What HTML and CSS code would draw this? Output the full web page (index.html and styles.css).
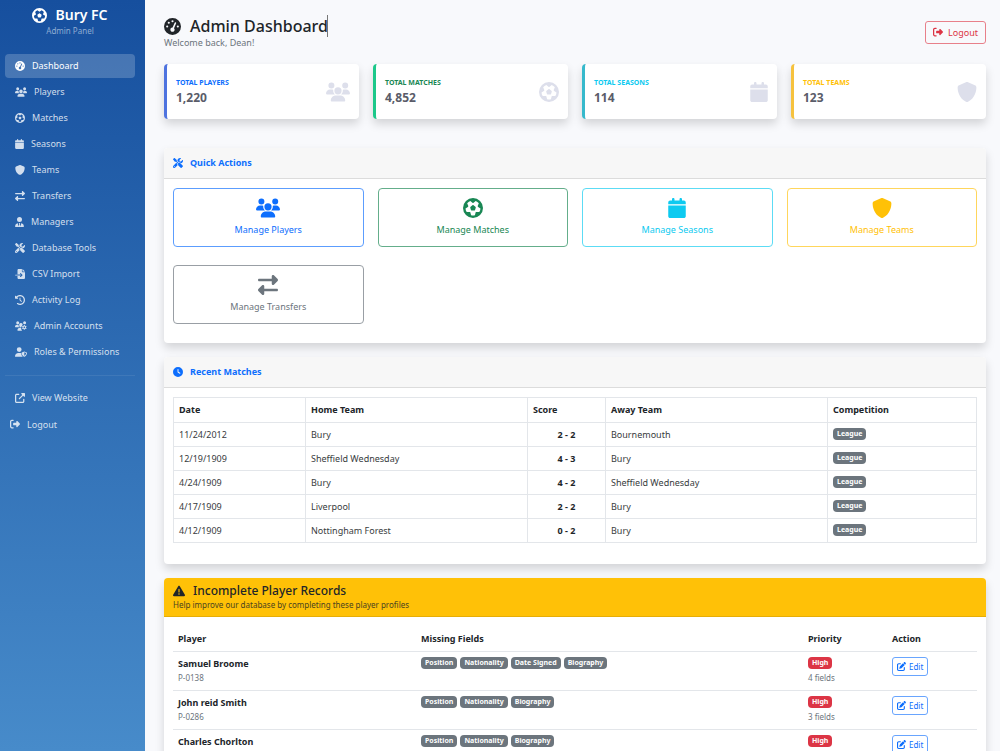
FILE: index.html
```html
<!DOCTYPE html>
<html lang="en">
<head>
    <meta charset="UTF-8">
    <meta name="viewport" content="width=device-width, initial-scale=1.0">
    <title>Admin Dashboard - Bury FC</title>
    <link rel="stylesheet" href="styles.css">
</head>
<body>

    <!-- Icon sprite -->
    <svg class="sprite" aria-hidden="true">
        <symbol id="gauge" viewBox="0 0 512 512"><path d="M0 256a256 256 0 1 1 512 0A256 256 0 1 1 0 256zM288 96a32 32 0 1 0 -64 0 32 32 0 1 0 64 0zM256 416c35.300 0 64-28.700 64-64c0-17.400-6.900-33.100-18.100-44.600L366 161.700c5.300-12.100-.2-26.300-12.300-31.600s-26.300 .2-31.600 12.300L257.900 288c-.6 0-1.300 0-1.900 0c-35.300 0-64 28.700-64 64s28.700 64 64 64zM176 144a32 32 0 1 0 -64 0 32 32 0 1 0 64 0zM96 288a32 32 0 1 0 0-64 32 32 0 1 0 0 64zm352-32a32 32 0 1 0 -64 0 32 32 0 1 0 64 0z"/></symbol>
        <symbol id="futbol" viewBox="0 0 512 512"><path d="M417.300 360.100l-71.600-4.800c-5.200-.3-10.300 1.100-14.500 4.200s-7.200 7.400-8.400 12.500l-17.600 69.600C289.500 445.800 273 448 256 448s-33.500-2.200-49.200-6.400L189.200 372c-1.300-5-4.300-9.400-8.400-12.500s-9.300-4.500-14.500-4.200l-71.600 4.800c-17.600-27.200-28.500-59.200-30.400-93.600L125 228.300c4.400-2.800 7.600-7 9.200-11.900s1.400-10.200-.5-15l-26.700-66.600C128 109.200 155.300 89 186.700 76.900l55.200 46c4 3.300 9 5.100 14.100 5.100s10.200-1.800 14.100-5.100l55.200-46c31.300 12.100 58.700 32.300 79.600 57.900l-26.700 66.600c-1.900 4.800-2.100 10.100-.5 15s4.900 9.100 9.200 11.900l60.700 38.200c-1.900 34.400-12.800 66.400-30.400 93.600zM256 512A256 256 0 1 0 256 0a256 256 0 1 0 0 512zm14.100-325.700c-8.400-6.100-19.800-6.100-28.200 0L194 221c-8.400 6.100-11.900 16.900-8.700 26.800l18.300 56.300c3.200 9.900 12.400 16.600 22.800 16.600h59.200c10.400 0 19.600-6.700 22.800-16.600l18.300-56.300c3.200-9.900-.3-20.700-8.700-26.800l-47.900-34.800z"/></symbol>
        <symbol id="users" viewBox="0 0 640 512"><path d="M144 0a80 80 0 1 1 0 160A80 80 0 1 1 144 0zM512 0a80 80 0 1 1 0 160A80 80 0 1 1 512 0zM0 298.700C0 239.800 47.800 192 106.700 192h42.700c15.900 0 31 3.500 44.600 9.700c-1.300 7.200-1.900 14.700-1.900 22.300c0 38.200 16.800 72.500 43.300 96H21.300C9.600 320 0 310.400 0 298.700zM405.300 320c26.600-23.500 43.300-57.800 43.300-96c0-7.600-.7-15-1.900-22.300c13.600-6.300 28.700-9.700 44.600-9.700h42.700C592.200 192 640 239.800 640 298.700c0 11.800-9.600 21.300-21.300 21.300H405.300zM224 224a96 96 0 1 1 192 0 96 96 0 1 1 -192 0zM128 485.300C128 411.700 187.700 352 261.300 352H378.700C452.300 352 512 411.700 512 485.300c0 14.700-11.900 26.700-26.700 26.700H154.700c-14.700 0-26.700-11.900-26.700-26.700z"/></symbol>
        <symbol id="calendar" viewBox="0 0 448 512"><path d="M96 32V64H48C21.500 64 0 85.500 0 112v48H448V112c0-26.500-21.500-48-48-48H352V32c0-17.700-14.300-32-32-32s-32 14.300-32 32V64H160V32c0-17.700-14.300-32-32-32S96 14.300 96 32zM448 192H0V464c0 26.500 21.500 48 48 48H400c26.500 0 48-21.500 48-48V192z"/></symbol>
        <symbol id="shield" viewBox="0 0 512 512"><path d="M269.400 2.900C265.200 1 260.700 0 256 0s-9.200 1-13.400 2.900L54.300 82.800c-22 9.300-38.400 31-38.300 57.200c.5 99.200 41.300 280.700 213.600 363.200c16.700 8 36.100 8 52.800 0C454.700 420.700 495.500 239.200 496 140c.1-26.200-16.300-47.900-38.300-57.200L269.400 2.900z"/></symbol>
        <symbol id="exchange" viewBox="0 0 512 512"><path d="M32 96l320 0V32c0-12.900 7.800-24.600 19.800-29.600s25.700-2.200 34.900 6.900l96 96c6 6 9.400 14.100 9.400 22.600s-3.400 16.600-9.400 22.600l-96 96c-9.200 9.200-22.900 11.900-34.900 6.900s-19.800-16.600-19.800-29.600V160L32 160c-17.700 0-32-14.300-32-32s14.300-32 32-32zM480 352c17.700 0 32 14.300 32 32s-14.300 32-32 32H160v64c0 12.900-7.800 24.600-19.800 29.600s-25.700 2.200-34.900-6.900l-96-96c-6-6-9.400-14.100-9.400-22.600s3.400-16.600 9.400-22.600l96-96c9.200-9.200 22.900-11.900 34.900-6.900s19.800 16.600 19.800 29.600l0 64H480z"/></symbol>
        <symbol id="user-tie" viewBox="0 0 448 512"><path d="M96 128a128 128 0 1 0 256 0A128 128 0 1 0 96 128zm94.500 200.200l18.600 31L175.800 483.100l-36-146.900c-2-8.100-9.800-13.400-17.900-11.300C51.900 342.400 0 405.800 0 481.300c0 17 13.800 30.700 30.700 30.700H417.300c17 0 30.700-13.800 30.700-30.700c0-75.500-51.900-138.900-121.900-156.400c-8.100-2-15.900 3.300-17.900 11.300l-36 146.900L238.900 359.200l18.600-31c6.400-10.700-1.300-24.200-13.700-24.200H204.200c-12.400 0-20.100 13.600-13.700 24.200z"/></symbol>
        <symbol id="tools" viewBox="0 0 512 512"><path d="M78.600 5C69.100-2.400 55.600-1.500 47 7L7 47c-8.500 8.500-9.400 22-2.100 31.600l80 104c4.500 5.900 11.600 9.400 19 9.400h54.100l109 109c-14.700 29-10 65.400 14.300 89.600l112 112c12.500 12.500 32.800 12.500 45.300 0l64-64c12.500-12.500 12.500-32.800 0-45.300l-112-112c-24.200-24.200-60.600-29-89.600-14.300l-109-109V104c0-7.500-3.500-14.500-9.400-19L78.600 5zM19.900 396.100C7.200 408.800 0 426.100 0 444.100C0 481.600 30.400 512 67.900 512c18 0 35.300-7.200 48-19.900L233.700 374.300c-7.800-20.900-9-43.600-3.600-65.100l-61.700-61.700L19.900 396.100zM512 144c0-10.500-1.100-20.700-3.200-30.500c-2.400-11.200-16.100-14.100-24.200-6l-63.900 63.900c-3 3-7.100 4.700-11.300 4.700H352c-8.800 0-16-7.200-16-16V102.600c0-4.200 1.700-8.300 4.700-11.300l63.900-63.900c8.100-8.100 5.200-21.800-6-24.200C388.700 1.100 378.500 0 368 0C288.500 0 224 64.500 224 144l0 .8 85.300 85.300c36-9.100 75.800 .5 104 28.700L429 274.500c49-23 83-72.800 83-130.500zM56 432a24 24 0 1 1 48 0 24 24 0 1 1 -48 0z"/></symbol>
        <symbol id="file-import" viewBox="0 0 512 512"><path d="M128 64c0-35.300 28.700-64 64-64H352V128c0 17.700 14.300 32 32 32H512V448c0 35.300-28.700 64-64 64H192c-35.300 0-64-28.700-64-64V336H302.100l-39 39c-9.400 9.400-9.400 24.600 0 33.900s24.600 9.400 33.900 0l80-80c9.400-9.400 9.400-24.600 0-33.900l-80-80c-9.400-9.400-24.600-9.400-33.900 0s-9.400 24.600 0 33.900l39 39H128V64zm0 224v48H24c-13.300 0-24-10.700-24-24s10.700-24 24-24H128zM512 128H384V0L512 128z"/></symbol>
        <symbol id="history" viewBox="0 0 512 512"><path d="M75 75L41 41C25.900 25.900 0 36.600 0 57.900V168c0 13.300 10.700 24 24 24H134.100c21.400 0 32.100-25.900 17-41l-30.800-30.800C155 85.500 203 64 256 64c106 0 192 86 192 192s-86 192-192 192c-40.800 0-78.600-12.700-109.700-34.400c-14.500-10.100-34.400-6.600-44.600 7.900s-6.600 34.400 7.900 44.600C151.200 495 201.700 512 256 512c141.400 0 256-114.600 256-256S397.400 0 256 0C185.300 0 121.300 28.700 75 75zm181 53c-13.300 0-24 10.700-24 24V256c0 6.400 2.500 12.500 7 17l72 72c9.400 9.400 24.600 9.400 33.900 0s9.400-24.600 0-33.900l-65-65V152c0-13.300-10.700-24-24-24z"/></symbol>
        <symbol id="users-cog" viewBox="0 0 640 512"><path d="M144 0a80 80 0 1 1 0 160A80 80 0 1 1 144 0zM512 0a80 80 0 1 1 0 160A80 80 0 1 1 512 0zM0 298.700C0 239.800 47.800 192 106.700 192h42.700c15.900 0 31 3.500 44.600 9.700c-1.300 7.200-1.900 14.700-1.900 22.300c0 38.200 16.800 72.500 43.300 96H21.300C9.600 320 0 310.400 0 298.700zM224 224a96 96 0 1 1 188-30c-30 15-50 50-48 78c-12 20-27 48-44 48c-53 0-96-43-96-96zM128 485.300C128 411.700 187.700 352 261.300 352H335c-15 50 0 100 45 160H154.700c-14.700 0-26.700-11.900-26.700-26.700z"/><path fill-rule="evenodd" d="M471 200h50l8 42 24 14 40-15 26 44-33 28v30l33 28-26 44-40-15-24 14-8 44h-50l-8-44-24-14-40 15-26-44 33-28v-30l-33-28 26-44 40 15 24-14zM496 284a44 44 0 1 0 0 88 44 44 0 1 0 0-88z"/></symbol>
        <symbol id="user-shield" viewBox="0 0 640 512"><path d="M224 256A128 128 0 1 0 224 0a128 128 0 1 0 0 256zM178.300 304C79.800 304 0 383.800 0 482.300C0 498.700 13.300 512 29.700 512H418c-60-48-85-110-82-190c-20-12-43-18-66-18z"/><path fill-rule="evenodd" d="M496 224l132 52c8 3 12 10 12 20c0 90-45 175-130 213c-9 4-19 4-28 0c-85-38-130-123-130-213c0-10 4-17 12-20zM496 274v188c56-28 90-82 94-150z"/></symbol>
        <symbol id="external" viewBox="0 0 512 512"><path d="M352 0c-12.900 0-24.600 7.800-29.600 19.800s-2.200 25.700 6.900 34.900L370.700 96 201.400 265.400c-12.500 12.500-12.500 32.800 0 45.300s32.800 12.500 45.300 0L416 141.300l41.400 41.400c9.200 9.200 22.900 11.900 34.900 6.900s19.800-16.600 19.800-29.600V32c0-17.700-14.300-32-32-32H352zM80 32C35.800 32 0 67.800 0 112V432c0 44.200 35.800 80 80 80H400c44.200 0 80-35.800 80-80V320c0-17.700-14.300-32-32-32s-32 14.300-32 32V432c0 8.800-7.200 16-16 16H80c-8.800 0-16-7.200-16-16V112c0-8.800 7.200-16 16-16H192c17.700 0 32-14.300 32-32s-14.300-32-32-32H80z"/></symbol>
        <symbol id="sign-out" viewBox="0 0 512 512"><path d="M377.900 105.900L500.700 228.700c7.200 7.200 11.300 17.100 11.300 27.300s-4.100 20.100-11.300 27.300L377.900 406.100c-6.400 6.400-15 9.900-24 9.900c-18.700 0-33.900-15.200-33.900-33.900l0-62.100-128 0c-17.700 0-32-14.300-32-32l0-64c0-17.700 14.300-32 32-32l128 0 0-62.100c0-18.700 15.200-33.900 33.900-33.900c9 0 17.600 3.600 24 9.900zM160 96L96 96c-17.700 0-32 14.300-32 32l0 256c0 17.700 14.300 32 32 32l64 0c17.700 0 32 14.300 32 32s-14.300 32-32 32l-64 0c-53 0-96-43-96-96L0 128C0 75 43 32 96 32l64 0c17.700 0 32 14.300 32 32s-14.300 32-32 32z"/></symbol>
        <symbol id="clock" viewBox="0 0 512 512"><path d="M256 0a256 256 0 1 1 0 512A256 256 0 1 1 256 0zM232 120V256c0 8 4 15.500 10.700 20l96 64c11 7.400 25.900 4.400 33.300-6.700s4.400-25.900-6.700-33.300L280 243.200V120c0-13.300-10.700-24-24-24s-24 10.700-24 24z"/></symbol>
        <symbol id="warning" viewBox="0 0 512 512"><path d="M256 32c14.200 0 27.300 7.500 34.500 19.800l216 368c7.300 12.400 7.300 27.700 .2 40.100S486.300 480 472 480H40c-14.300 0-27.600-7.700-34.700-20.100s-7-27.800 .2-40.100l216-368C228.700 39.500 241.800 32 256 32zm0 128c-13.300 0-24 10.700-24 24V296c0 13.300 10.700 24 24 24s24-10.700 24-24V184c0-13.300-10.700-24-24-24zm32 224a32 32 0 1 0 -64 0 32 32 0 1 0 64 0z"/></symbol>
        <symbol id="edit" viewBox="0 0 512 512"><path d="M471.600 21.700c-21.900-21.900-57.300-21.900-79.200 0L362.300 51.700l97.900 97.900 30.100-30.100c21.900-21.900 21.900-57.300 0-79.200L471.600 21.700zm-299.200 220c-6.100 6.100-10.800 13.600-13.500 21.900l-29.600 88.800c-2.900 8.600-.6 18.100 5.800 24.600s15.900 8.700 24.600 5.800l88.800-29.600c8.200-2.700 15.700-7.400 21.900-13.500L437.700 172.300 339.700 74.300 172.400 241.700zM96 64C43 64 0 107 0 160V416c0 53 43 96 96 96H352c53 0 96-43 96-96V320c0-17.700-14.300-32-32-32s-32 14.300-32 32v96c0 17.700-14.300 32-32 32H96c-17.700 0-32-14.300-32-32V160c0-17.700 14.300-32 32-32h96c17.700 0 32-14.300 32-32s-14.300-32-32-32H96z"/></symbol>
    </svg>

    <div class="layout">
        <nav class="sidebar">
            <div class="brand">
                <div class="brand-name"><svg class="icon icon-lg"><use href="#futbol"/></svg>Bury FC</div>
                <div class="brand-sub">Admin Panel</div>
            </div>
            <a class="nav-link active" href="#"><svg class="icon"><use href="#gauge"/></svg>Dashboard</a>
            <a class="nav-link" href="#"><svg class="icon icon-wide"><use href="#users"/></svg>Players</a>
            <a class="nav-link" href="#"><svg class="icon"><use href="#futbol"/></svg>Matches</a>
            <a class="nav-link" href="#"><svg class="icon icon-narrow"><use href="#calendar"/></svg>Seasons</a>
            <a class="nav-link" href="#"><svg class="icon"><use href="#shield"/></svg>Teams</a>
            <a class="nav-link" href="#"><svg class="icon"><use href="#exchange"/></svg>Transfers</a>
            <a class="nav-link" href="#"><svg class="icon icon-narrow"><use href="#user-tie"/></svg>Managers</a>
            <a class="nav-link" href="#"><svg class="icon"><use href="#tools"/></svg>Database Tools</a>
            <a class="nav-link" href="#"><svg class="icon"><use href="#file-import"/></svg>CSV Import</a>
            <a class="nav-link" href="#"><svg class="icon"><use href="#history"/></svg>Activity Log</a>
            <a class="nav-link" href="#"><svg class="icon icon-wide"><use href="#users-cog"/></svg>Admin Accounts</a>
            <a class="nav-link" href="#"><svg class="icon icon-wide"><use href="#user-shield"/></svg>Roles &amp; Permissions</a>
            <hr class="nav-divider">
            <a class="nav-link" href="#"><svg class="icon"><use href="#external"/></svg>View Website</a>
            <button class="nav-logout" type="button"><svg class="icon"><use href="#sign-out"/></svg>Logout</button>
        </nav>

        <main class="main">
            <header class="page-header">
                <div>
                    <h1 class="page-title"><svg class="icon icon-xl"><use href="#gauge"/></svg>Admin Dashboard<span class="caret"></span></h1>
                    <p class="welcome">Welcome back, Dean!</p>
                </div>
                <button class="btn btn-danger" type="button"><svg class="icon"><use href="#sign-out"/></svg>Logout</button>
            </header>

            <section class="stats">
                <div class="stat stat-players">
                    <div class="stat-text">
                        <div class="stat-label">Total Players</div>
                        <div class="stat-value">1,220</div>
                    </div>
                    <svg class="stat-icon stat-icon-wide"><use href="#users"/></svg>
                </div>
                <div class="stat stat-matches">
                    <div class="stat-text">
                        <div class="stat-label">Total Matches</div>
                        <div class="stat-value">4,852</div>
                    </div>
                    <svg class="stat-icon"><use href="#futbol"/></svg>
                </div>
                <div class="stat stat-seasons">
                    <div class="stat-text">
                        <div class="stat-label">Total Seasons</div>
                        <div class="stat-value">114</div>
                    </div>
                    <svg class="stat-icon stat-icon-narrow"><use href="#calendar"/></svg>
                </div>
                <div class="stat stat-teams">
                    <div class="stat-text">
                        <div class="stat-label">Total Teams</div>
                        <div class="stat-value">123</div>
                    </div>
                    <svg class="stat-icon"><use href="#shield"/></svg>
                </div>
            </section>

            <section class="card">
                <h2 class="card-header"><svg class="icon"><use href="#tools"/></svg>Quick Actions</h2>
                <div class="card-body actions">
                    <a class="action action-primary" href="#"><svg class="action-icon"><use href="#users"/></svg>Manage Players</a>
                    <a class="action action-success" href="#"><svg class="action-icon"><use href="#futbol"/></svg>Manage Matches</a>
                    <a class="action action-info" href="#"><svg class="action-icon"><use href="#calendar"/></svg>Manage Seasons</a>
                    <a class="action action-warning" href="#"><svg class="action-icon"><use href="#shield"/></svg>Manage Teams</a>
                    <a class="action action-secondary" href="#"><svg class="action-icon"><use href="#exchange"/></svg>Manage Transfers</a>
                </div>
            </section>

            <section class="card">
                <h2 class="card-header"><svg class="icon"><use href="#clock"/></svg>Recent Matches</h2>
                <div class="card-body">
                    <table class="matches">
                        <colgroup>
                            <col class="col-date">
                            <col class="col-team">
                            <col class="col-score">
                            <col class="col-team">
                            <col>
                        </colgroup>
                        <thead>
                            <tr><th>Date</th><th>Home Team</th><th>Score</th><th>Away Team</th><th>Competition</th></tr>
                        </thead>
                        <tbody>
                            <tr><td>11/24/2012</td><td>Bury</td><td class="score">2 - 2</td><td>Bournemouth</td><td><span class="badge">League</span></td></tr>
                            <tr><td>12/19/1909</td><td>Sheffield Wednesday</td><td class="score">4 - 3</td><td>Bury</td><td><span class="badge">League</span></td></tr>
                            <tr><td>4/24/1909</td><td>Bury</td><td class="score">4 - 2</td><td>Sheffield Wednesday</td><td><span class="badge">League</span></td></tr>
                            <tr><td>4/17/1909</td><td>Liverpool</td><td class="score">2 - 2</td><td>Bury</td><td><span class="badge">League</span></td></tr>
                            <tr><td>4/12/1909</td><td>Nottingham Forest</td><td class="score">0 - 2</td><td>Bury</td><td><span class="badge">League</span></td></tr>
                        </tbody>
                    </table>
                </div>
            </section>

            <section class="card">
                <div class="card-alert">
                    <h2 class="alert-title"><svg class="icon icon-alert"><use href="#warning"/></svg>Incomplete Player Records</h2>
                    <p class="alert-text">Help improve our database by completing these player profiles</p>
                </div>
                <div class="card-body">
                    <table class="records">
                        <colgroup>
                            <col class="col-player">
                            <col class="col-missing">
                            <col class="col-priority">
                            <col>
                        </colgroup>
                        <thead>
                            <tr><th>Player</th><th>Missing Fields</th><th>Priority</th><th>Action</th></tr>
                        </thead>
                        <tbody>
                            <tr>
                                <td><strong>Samuel Broome</strong><small>P-0138</small></td>
                                <td><div class="badges"><span class="badge">Position</span><span class="badge">Nationality</span><span class="badge">Date Signed</span><span class="badge">Biography</span></div></td>
                                <td><span class="badge badge-high">High</span><small>4 fields</small></td>
                                <td><a class="btn btn-edit" href="#"><svg class="icon icon-sm"><use href="#edit"/></svg>Edit</a></td>
                            </tr>
                            <tr>
                                <td><strong>John reid Smith</strong><small>P-0286</small></td>
                                <td><div class="badges"><span class="badge">Position</span><span class="badge">Nationality</span><span class="badge">Biography</span></div></td>
                                <td><span class="badge badge-high">High</span><small>3 fields</small></td>
                                <td><a class="btn btn-edit" href="#"><svg class="icon icon-sm"><use href="#edit"/></svg>Edit</a></td>
                            </tr>
                            <tr>
                                <td><strong>Charles Chorlton</strong></td>
                                <td><div class="badges"><span class="badge">Position</span><span class="badge">Nationality</span><span class="badge">Biography</span></div></td>
                                <td><span class="badge badge-high">High</span><small>3 fields</small></td>
                                <td><a class="btn btn-edit" href="#"><svg class="icon icon-sm"><use href="#edit"/></svg>Edit</a></td>
                            </tr>
                        </tbody>
                    </table>
                </div>
            </section>
        </main>
    </div>

</body>
</html>
```
FILE: styles.css
```css
* {
    box-sizing: border-box;
}

body {
    margin: 0;
    background-color: #f8f9fc;
    color: #212529;
    font-family: "Noto Sans", "Open Sans", sans-serif;
    font-size: 9px;
    line-height: 14px;
}

h1, h2, p {
    margin: 0;
}

a {
    text-decoration: none;
}

button {
    font-family: inherit;
    cursor: pointer;
}

.sprite {
    display: none;
}

.icon {
    width: 10px;
    height: 10px;
    fill: currentColor;
    flex-shrink: 0;
}

.icon-sm {
    width: 9px;
    height: 9px;
}

.icon-narrow {
    width: 9px;
}

.icon-wide {
    width: 12px;
}

.icon-alert {
    width: 12px;
    height: 12px;
}

.icon-lg {
    width: 15px;
    height: 15px;
}

.icon-xl {
    width: 17px;
    height: 17px;
}

.layout {
    display: flex;
    align-items: flex-start;
}

/* Sidebar */
.sidebar {
    position: sticky;
    top: 0;
    display: flex;
    flex-direction: column;
    gap: 2px;
    width: 145px;
    height: 100vh;
    flex-shrink: 0;
    padding: 5px 10px 5px 5px;
    background: linear-gradient(180deg, #164f9e, #478bca);
}

.brand {
    margin-bottom: 15px;
    text-align: center;
    color: #fff;
}

.brand-name {
    display: flex;
    align-items: center;
    justify-content: center;
    gap: 8px;
    font-size: 14px;
    font-weight: 600;
    line-height: 20px;
}

.brand-sub {
    font-size: 8px;
    line-height: 12px;
    color: #8fadd3;
}

.nav-link,
.nav-logout {
    display: flex;
    align-items: center;
    gap: 7px;
    height: 24px;
    padding: 0 10px;
    border-radius: 4px;
    color: rgba(255, 255, 255, 0.8);
    font-size: 9px;
}

.nav-link.active {
    background-color: rgba(255, 255, 255, 0.2);
    color: #fff;
}

.nav-logout {
    padding: 0 5px;
    border: none;
    background: none;
}

.nav-divider {
    width: 100%;
    margin: 9px 0 8px;
    border: none;
    border-top: 1px solid rgba(255, 255, 255, 0.08);
}

/* Main column */
.main {
    flex: 1;
    min-width: 0;
    padding: 15px 14px 14px 19px;
}

.page-header {
    display: flex;
    justify-content: space-between;
    align-items: center;
    margin-bottom: 15px;
}

.page-title {
    display: flex;
    align-items: center;
    gap: 9px;
    font-size: 16px;
    font-weight: 500;
    line-height: 22px;
}

.caret {
    width: 1px;
    height: 22px;
    margin-left: -10px;
    background-color: #777;
}

.welcome {
    line-height: 12px;
    color: #6c757d;
}

.btn {
    display: inline-flex;
    align-items: center;
    border: 1px solid;
    border-radius: 3px;
    background: none;
}

.btn-danger {
    gap: 5px;
    height: 23px;
    padding: 0 7px;
    border-color: #e8808a;
    color: #dc3545;
    font-size: 9px;
}

.btn-edit {
    gap: 3px;
    height: 19px;
    padding: 0 4px;
    border-color: #69a5fe;
    color: #0d6efd;
    font-size: 8px;
}

/* Stat cards */
.stats {
    display: grid;
    grid-template-columns: repeat(4, 1fr);
    gap: 14px;
    margin-bottom: 29px;
}

.stat {
    display: flex;
    align-items: center;
    justify-content: space-between;
    height: 55px;
    padding: 0 9px;
    border-left: 3px solid;
    border-radius: 4px;
    background-color: #fff;
    box-shadow: 0 5px 10px rgba(0, 0, 0, 0.15);
}

.stat-text {
    padding-top: 1px;
}

.stat-label {
    font-size: 7px;
    font-weight: 700;
    line-height: 12px;
    text-transform: uppercase;
}

.stat-value {
    font-size: 12px;
    font-weight: 700;
    line-height: 18px;
    color: #5a5c69;
}

.stat-icon {
    width: 20px;
    height: 20px;
    fill: #dddfeb;
}

.stat-icon-wide {
    width: 24px;
}

.stat-icon-narrow {
    width: 18px;
}

.stat-players {
    border-color: #4e73df;
}

.stat-players .stat-label {
    color: #0d6efd;
}

.stat-matches {
    border-color: #1cc88a;
}

.stat-matches .stat-label {
    color: #198754;
}

.stat-seasons {
    border-color: #36b9cc;
}

.stat-seasons .stat-label {
    color: #0dcaf0;
}

.stat-teams {
    border-color: #f6c23e;
}

.stat-teams .stat-label {
    color: #ffc107;
}

/* Cards */
.card {
    margin-bottom: 14px;
    border-radius: 4px;
    background-color: #fff;
    box-shadow: 0 5px 10px rgba(0, 0, 0, 0.15);
}

.card-header {
    display: flex;
    align-items: center;
    gap: 7px;
    height: 31px;
    padding: 0 9px;
    border-bottom: 1px solid #dcdcdc;
    border-radius: 4px 4px 0 0;
    background-color: #f7f7f7;
    color: #0d6efd;
    font-size: 9px;
    font-weight: 700;
}

.card-body {
    padding: 9px 9px 19px;
}

.actions {
    display: grid;
    grid-template-columns: repeat(4, 1fr);
    gap: 18px 14px;
}

.action {
    display: flex;
    flex-direction: column;
    align-items: center;
    gap: 5px;
    height: 59px;
    padding-top: 9px;
    border: 1px solid;
    border-radius: 4px;
}

.action-icon {
    width: 24px;
    height: 20px;
    fill: currentColor;
}

.action-primary {
    border-color: #5c9dfe;
    color: #0d6efd;
}

.action-success {
    border-color: #64ae8b;
    color: #198754;
}

.action-info {
    border-color: #5cdcf5;
    color: #0dcaf0;
}

.action-warning {
    border-color: #ffd65c;
    color: #ffc107;
}

.action-secondary {
    border-color: #999fa5;
    color: #6c757d;
}

/* Tables */
table {
    width: 100%;
    border-collapse: collapse;
    table-layout: fixed;
}

th,
td {
    padding: 5px;
    text-align: left;
}

.matches th,
.matches td {
    border: 1px solid #e3e6ea;
}

.matches td {
    line-height: 13px;
    color: #383c40;
}

.matches .score {
    text-align: center;
    font-weight: 700;
    color: #212529;
}

.matches {
    margin-bottom: 21px;
}

.card-body:has(.matches) {
    padding-bottom: 0;
    display: flow-root;
}

.col-date {
    width: 132px;
}

.col-team {
    width: 222px;
}

.col-score {
    width: 78px;
}

.badge {
    display: inline-block;
    padding: 0 4px;
    border-radius: 4px;
    background-color: #6c757d;
    color: #fff;
    font-size: 7px;
    font-weight: 700;
    line-height: 12px;
    vertical-align: top;
}

.badge-high {
    background-color: #dc3545;
}

.badges {
    display: flex;
    gap: 3px;
}

/* Incomplete records */
.card-alert {
    padding: 5px 9px;
    border-bottom: 1px solid #e6ad06;
    border-radius: 4px 4px 0 0;
    background-color: #ffc107;
}

.alert-title {
    display: flex;
    align-items: center;
    gap: 8px;
    font-size: 12px;
    font-weight: 500;
    line-height: 16px;
}

.alert-text {
    font-size: 8px;
    line-height: 12px;
    color: #4a4320;
}

.records tr {
    border-bottom: 1px solid #e3e6ea;
}

.records th {
    padding-top: 6px;
}

.records td {
    vertical-align: top;
}

.records strong,
.records small {
    display: block;
}

.records small {
    font-size: 8px;
    color: #6c757d;
}

.col-player {
    width: 243px;
}

.col-missing {
    width: 387px;
}

.col-priority {
    width: 84px;
}
```
